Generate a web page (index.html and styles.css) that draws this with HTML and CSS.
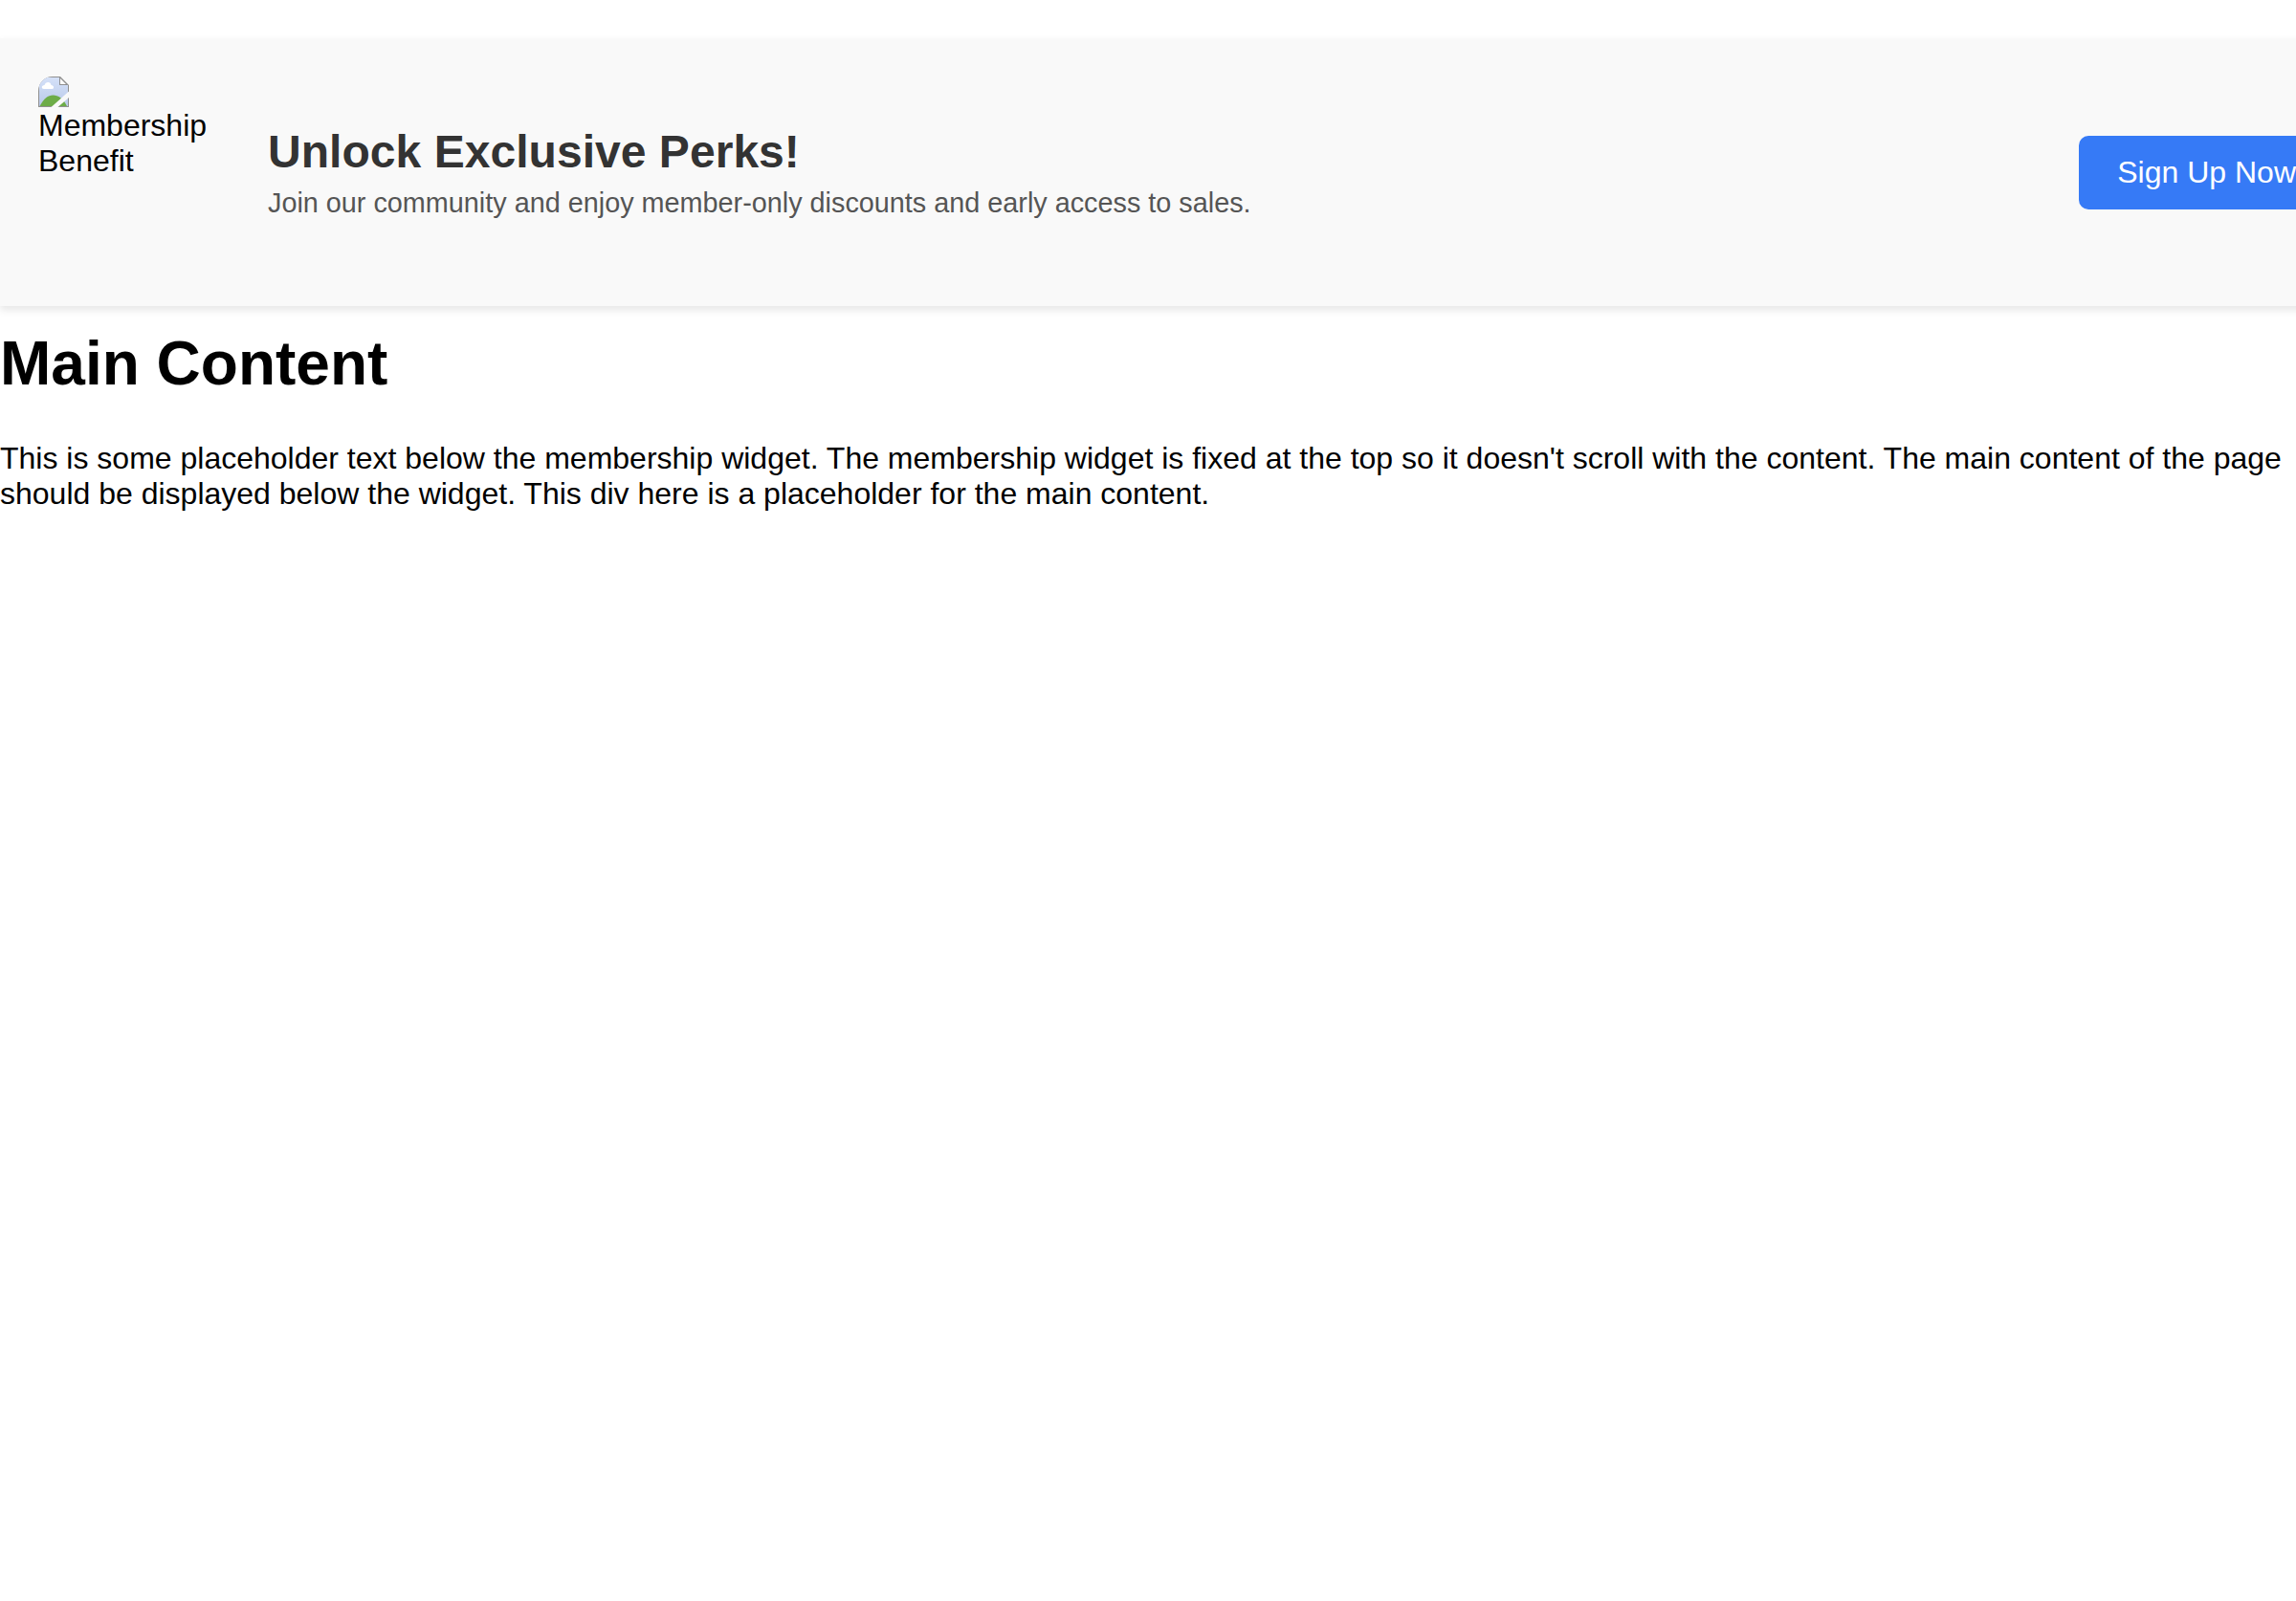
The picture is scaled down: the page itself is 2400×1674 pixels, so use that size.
FILE: index.html
```html
<!DOCTYPE html>
<html lang="en">
<head>
<meta charset="utf-8">
<title>Membership</title>
<link rel="stylesheet" href="styles.css">
</head>
<body>
<section class="widget">
  <div class="benefit">
    <svg class="benefit-icon" viewBox="0 0 32 32" aria-hidden="true">
      <defs>
        <linearGradient id="sky" x1="0" y1="0" x2="0" y2="1"><stop offset="0" stop-color="#d5e1f8"/><stop offset="1" stop-color="#b9c9ea"/></linearGradient>
        <clipPath id="round"><path d="M0 32V15A15 15 0 0 1 15 0H32V32Z"/></clipPath>
      </defs>
      <g clip-path="url(#round)">
        <path d="M0 0H23L32 9V32H0Z" fill="#909090"/>
        <path d="M1 1H22V9H31V31H1Z" fill="url(#sky)"/>
        <path d="M23 2V8H29Z" fill="#fff"/>
        <path d="M1.500 31C6 23 10 19.500 15.500 19.500S26 23 30 31Z" fill="#6dac48"/>
        <path d="M6 13C3 13 3 9 6.500 9C7.500 5 13 5 13.500 9C16.500 9 17 13 14.500 13Z" fill="#fff"/>
        <path d="M32 15.500V22L20.500 32H13.500Z" fill="#f9f9f9"/>
      </g>
    </svg>
    <span class="benefit-text">Membership Benefit</span>
  </div>
  <div class="copy">
    <h2 class="title">Unlock Exclusive Perks!</h2>
    <p class="subtitle">Join our community and enjoy member-only discounts and early access to sales.</p>
  </div>
  <button class="signup">Sign Up Now</button>
</section>
<main class="content">
  <h1 class="heading">Main Content</h1>
  <p class="text">This is some placeholder text below the membership widget. The membership widget is fixed at the top so it doesn't scroll with the content. The main content of the page should be displayed below the widget. This div here is a placeholder for the main content.</p>
</main>
</body>
</html>
```

FILE: styles.css
```css
html {
  overflow: hidden;
}

body {
  margin: 0;
  background: #fff;
  color: #000;
  font: 32px/37px "Liberation Sans", Arial, sans-serif;
}

.widget {
  display: flex;
  align-items: center;
  box-sizing: content-box;
  width: 100%;
  height: 200px;
  margin-top: 40px;
  padding: 40px;
  background: #f9f9f9;
  box-shadow: 0 4px 8px rgba(0, 0, 0, 0.1);
}

.benefit {
  flex: none;
  width: 200px;
  height: 200px;
  margin-right: 40px;
}

.benefit-icon {
  display: block;
  width: 32px;
  height: 32px;
}

.benefit-text {
  display: block;
  margin-top: 1px;
}

.copy {
  flex: 1;
}

.title {
  margin: 0 0 10px;
  color: #333;
  font-size: 48px;
  line-height: 55px;
  letter-spacing: 0.04px;
}

.subtitle {
  margin: 0;
  color: #555;
  font-size: 28.8px;
  line-height: 33px;
}

.signup {
  flex: none;
  padding: 20px 40px;
  border: 0;
  border-radius: 10px;
  background: #367af6;
  color: #fff;
  font: inherit;
}

.heading {
  margin: 23px 0 44px;
  font-size: 64px;
  line-height: 74px;
}

.text {
  margin: 0;
}
```
